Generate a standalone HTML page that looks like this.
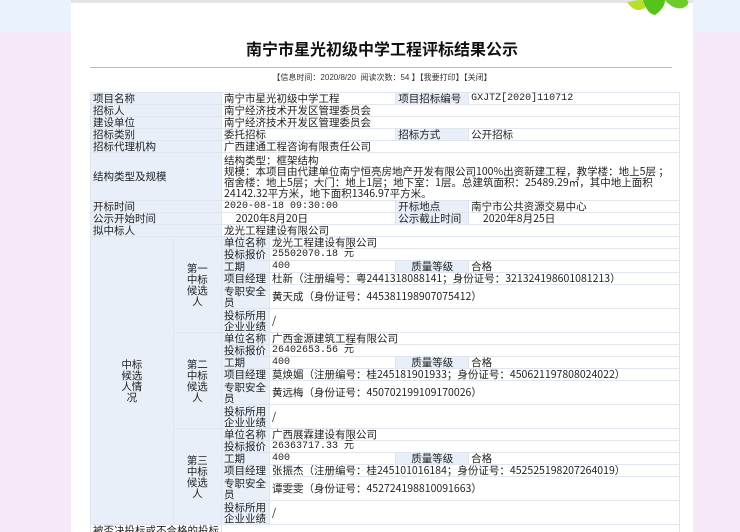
<!DOCTYPE html>
<html><head><meta charset="utf-8"><style>
*{margin:0;padding:0;box-sizing:border-box}
html,body{width:740px;height:532px;overflow:hidden}
body{background:#f5e9f7;font-family:"Liberation Sans","Noto Sans CJK SC",sans-serif;position:relative}
.topbg{position:absolute;left:0;top:0;width:740px;height:32px;background:#eaf2fd}
.page{position:absolute;left:71px;top:0;width:622px;height:532px;background:#fff}
.gray{position:absolute;left:71px;top:0;width:622px;height:3px;background:#e4e4e4}
h1{position:absolute;left:71px;width:622px;top:36px;text-align:center;font-size:16px;font-weight:bold;color:#111;font-family:"Noto Sans CJK SC",sans-serif}
.line{position:absolute;left:90px;top:67px;width:582px;height:1px;background:#bbb}
.info{position:absolute;left:71px;width:622px;top:72px;text-align:center;font-size:8px;color:#333}
table{position:absolute;left:90px;top:92px;width:590px;border-collapse:collapse;font-size:10.5px;color:#222;font-family:"Noto Sans CJK SC",sans-serif}
td{border:1px solid #e0e6ee;padding:0 2px;line-height:11px;height:12px;vertical-align:middle;white-space:nowrap}
td.w{white-space:normal}
.l{background:#e8eff9}
.c{text-align:center}
.m{font-family:"Liberation Mono","Noto Sans CJK SC",monospace;font-size:10px}
</style></head><body>
<div class="topbg"></div>
<div class="page"></div>
<div class="gray"></div>
<svg style="position:absolute;left:625px;top:0" width="68" height="16"><path d="M2 2 Q10 14 20 8 Q24 0 14 0Z" fill="#b6e02a"/><path d="M18 0 Q22 14 30 15 Q40 8 40 0Z" fill="#58c21c"/><path d="M40 0 Q48 10 58 8 Q66 4 62 0Z" fill="#6ccd2a"/></svg>
<h1>南宁市星光初级中学工程评标结果公示</h1>
<div class="line"></div>
<div class="info">【信息时间：2020/8/20 &nbsp;阅读次数：54 】【我要打印】【关闭】</div>
<table>
<colgroup><col style="width:82px"><col style="width:48px"><col style="width:48px"><col style="width:127px"><col style="width:73px"><col style="width:212px"></colgroup>
<tr><td class="l" colspan="2">项目名称</td><td colspan="2">南宁市星光初级中学工程</td><td class="l">项目招标编号</td><td class="m">GXJTZ[2020]110712</td></tr>
<tr><td class="l" colspan="2">招标人</td><td colspan="4">南宁经济技术开发区管理委员会</td></tr>
<tr><td class="l" colspan="2">建设单位</td><td colspan="4">南宁经济技术开发区管理委员会</td></tr>
<tr><td class="l" colspan="2">招标类别</td><td colspan="2">委托招标</td><td class="l">招标方式</td><td>公开招标</td></tr>
<tr><td class="l" colspan="2">招标代理机构</td><td colspan="4">广西建通工程咨询有限责任公司</td></tr>
<tr><td class="l" colspan="2">结构类型及规模</td><td colspan="4" class="w" style="height:48px">结构类型：框架结构<br>规模：本项目由代建单位南宁恒亮房地产开发有限公司100%出资新建工程，教学楼：地上5层 ；宿舍楼：地上5层；大门：地上1层；地下室：1层。总建筑面积：25489.29㎡，其中地上面积24142.32平方米，地下面积1346.97平方米。</td></tr>
<tr><td class="l" colspan="2">开标时间</td><td colspan="2" class="m">2020-08-18 09:30:00</td><td class="l">开标地点</td><td>南宁市公共资源交易中心</td></tr>
<tr><td class="l" colspan="2">公示开始时间</td><td colspan="2">&nbsp;&nbsp;&nbsp;&nbsp;&nbsp;2020年8月20日</td><td class="l">公示截止时间</td><td>&nbsp;&nbsp;&nbsp;&nbsp;&nbsp;2020年8月25日</td></tr>
<tr><td class="l" colspan="2">拟中标人</td><td colspan="4">龙光工程建设有限公司</td></tr>

<tr><td class="l c" rowspan="18">中标<br>候选<br>人情<br>况</td><td class="l c" rowspan="6">第一<br>中标<br>候选<br>人</td><td class="l">单位名称</td><td colspan="3">龙光工程建设有限公司</td></tr>
<tr><td class="l">投标报价</td><td colspan="3" class="m">25502070.18 元</td></tr>
<tr><td class="l">工期</td><td class="m">400</td><td class="l c">质量等级</td><td>合格</td></tr>
<tr><td class="l">项目经理</td><td colspan="3">杜新（注册编号：粤2441318088141；身份证号：321324198601081213）</td></tr>
<tr><td class="l" style="height:24px">专职安全<br>员</td><td colspan="3">黄天成（身份证号：445381198907075412）</td></tr>
<tr><td class="l" style="height:24px">投标所用<br>企业业绩</td><td colspan="3">/</td></tr>

<tr><td class="l c" rowspan="6">第二<br>中标<br>候选<br>人</td><td class="l">单位名称</td><td colspan="3">广西金源建筑工程有限公司</td></tr>
<tr><td class="l">投标报价</td><td colspan="3" class="m">26402653.56 元</td></tr>
<tr><td class="l">工期</td><td class="m">400</td><td class="l c">质量等级</td><td>合格</td></tr>
<tr><td class="l">项目经理</td><td colspan="3">莫焕媚（注册编号：桂245181901933；身份证号：450621197808024022）</td></tr>
<tr><td class="l" style="height:24px">专职安全<br>员</td><td colspan="3">黄远梅（身份证号：450702199109170026）</td></tr>
<tr><td class="l" style="height:24px">投标所用<br>企业业绩</td><td colspan="3">/</td></tr>

<tr><td class="l c" rowspan="6">第三<br>中标<br>候选<br>人</td><td class="l">单位名称</td><td colspan="3">广西展霖建设有限公司</td></tr>
<tr><td class="l">投标报价</td><td colspan="3" class="m">26363717.33 元</td></tr>
<tr><td class="l">工期</td><td class="m">400</td><td class="l c">质量等级</td><td>合格</td></tr>
<tr><td class="l">项目经理</td><td colspan="3">张振杰（注册编号：桂245101016184；身份证号：452525198207264019）</td></tr>
<tr><td class="l" style="height:24px">专职安全<br>员</td><td colspan="3">谭雯雯（身份证号：452724198810091663）</td></tr>
<tr><td class="l" style="height:24px">投标所用<br>企业业绩</td><td colspan="3">/</td></tr>
<tr><td colspan="2">被否决投标或不合格的投标</td><td colspan="4"></td></tr>
</table>
</body></html>
